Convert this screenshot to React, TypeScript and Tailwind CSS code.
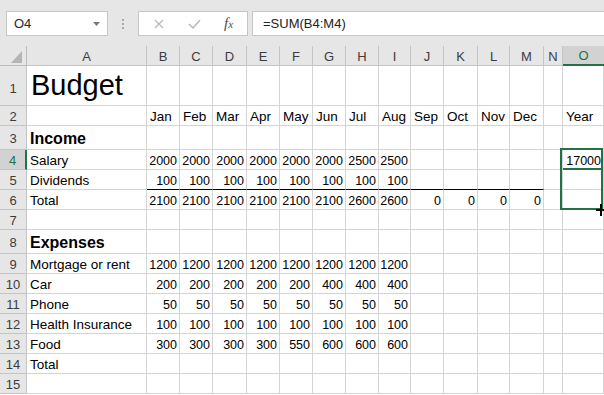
import React from "react";

const GREEN = "#217346";

type V = string | number | null;

const pad = (row: V[]): V[] => [...row, ...Array(15 - row.length).fill(null)];
const rep = (v: number, n: number) => Array(n).fill(v) as number[];

const data: V[][] = [
  pad(["Budget"]),
  pad([null, "Jan", "Feb", "Mar", "Apr", "May", "Jun", "Jul", "Aug", "Sep", "Oct", "Nov", "Dec", null, "Year"]),
  pad(["Income"]),
  pad(["Salary", 2000, 2000, 2000, 2000, 2000, 2000, 2500, 2500, null, null, null, null, null, 17000]),
  pad(["Dividends", ...rep(100, 8)]),
  pad(["Total", 2100, 2100, 2100, 2100, 2100, 2100, 2600, 2600, 0, 0, 0, 0]),
  pad([]),
  pad(["Expenses"]),
  pad(["Mortgage or rent", ...rep(1200, 8)]),
  pad(["Car", 200, 200, 200, 200, 200, 400, 400, 400]),
  pad(["Phone", ...rep(50, 8)]),
  pad(["Health Insurance", ...rep(100, 8)]),
  pad(["Food", 300, 300, 300, 300, 550, 600, 600, 600]),
  pad(["Total"]),
  pad([]),
];

const columns = ["A", "B", "C", "D", "E", "F", "G", "H", "I", "J", "K", "L", "M", "N", "O"];

function Toolbar() {
  return (
    <div className="h-[46px] bg-[#e6e6e6] flex items-start pt-[11px]">
      {/* name box */}
      <div className="ml-[6px] w-[102px] h-[25px] bg-white border border-[#c6c6c6] flex items-center justify-between pl-[7px] pr-[7px]">
        <span className="text-[13px] text-[#262626] leading-none">O4</span>
        <svg width="7" height="4" viewBox="0 0 7 4">
          <polygon points="0,0 7,0 3.5,4" fill="#7a7a7a" />
        </svg>
      </div>
      {/* grip dots */}
      <div className="ml-[14px] mt-[8px] flex flex-col gap-[2px]">
        <span className="w-[2px] h-[2px] bg-[#ababab]" />
        <span className="w-[2px] h-[2px] bg-[#ababab]" />
        <span className="w-[2px] h-[2px] bg-[#ababab]" />
      </div>
      {/* cancel / enter / fx */}
      <div className="ml-[14px] w-[110px] h-[25px] bg-white border border-[#c6c6c6] flex items-center">
        <svg className="ml-[15px]" width="10" height="10" viewBox="0 0 10 10">
          <path d="M1 1 L9 9 M9 1 L1 9" stroke="#bcbcbc" strokeWidth="1.4" fill="none" />
        </svg>
        <svg className="ml-[24px]" width="13" height="10" viewBox="0 0 13 10">
          <path d="M1 5 L5 9 L12 1" stroke="#bcbcbc" strokeWidth="1.6" fill="none" />
        </svg>
        <span className="ml-[23px] font-['Liberation_Serif',serif] italic text-[15px] text-[#4a4a4a] leading-none">
          f<span className="text-[11px]">x</span>
        </span>
      </div>
      {/* formula input */}
      <div className="ml-[4px] flex-1 h-[25px] bg-white border border-[#c6c6c6] border-r-0 flex items-center pl-[10px]">
        <span className="text-[13px] text-[#222] leading-none">=SUM(B4:M4)</span>
      </div>
    </div>
  );
}

function Cell({ v, r, c }: { v: V; r: number; c: number }) {
  const isNum = typeof v === "number";
  const underline = r === 4 && c >= 1 && c <= 12;
  let cls = "border-r border-b border-[#d4d4d4] flex items-end whitespace-nowrap text-black leading-none ";
  if (underline) cls += "border-b-black ";
  if (v === null) return <div className={cls} />;
  if (r === 0 && c === 0) {
    return (
      <div className={cls + "pl-[4px] pb-[5px]"}>
        <span className="text-[29px]">{v}</span>
      </div>
    );
  }
  if ((r === 2 || r === 7) && c === 0) {
    return (
      <div className={cls + "pl-[3px] pb-[2px]"}>
        <span className="text-[16px] font-bold">{v}</span>
      </div>
    );
  }
  if (isNum) {
    return (
      <div className={cls + "justify-end pr-[2px] pb-[2px]"}>
        <span className="text-[12.5px]">{v}</span>
      </div>
    );
  }
  return (
    <div className={cls + "pl-[3px] pb-[2px]"}>
      <span className="text-[13.5px]">{v}</span>
    </div>
  );
}

export default function App() {
  return (
    <div className="w-[604px] h-[395px] overflow-hidden bg-white font-['Liberation_Sans',Arial,sans-serif]">
      <Toolbar />
      <div className="relative grid grid-cols-[27px_120px_33px_33px_34px_33px_33px_33px_33px_32px_33px_34px_32px_34px_19px_1fr] grid-rows-[20px_40px_20px_24px_20px_20px_20px_20px_24px_20px_20px_20px_20px_20px_20px_20px]">
        {/* corner */}
        <div className="bg-[#e6e6e6] border-r border-b border-[#bcbcbc] relative">
          <svg className="absolute left-0 top-0" width="26" height="19" viewBox="0 0 26 19">
            <polygon points="11,17 22,17 22,5" fill="#b5b5b5" />
          </svg>
        </div>
        {columns.map((col) =>
          col === "O" ? (
            <div
              key={col}
              className="bg-[#d2d2d2] border-b-2 border-b-[#217346] flex items-center justify-center text-[13px] text-[#217346] leading-none pt-[1px]"
            >
              {col}
            </div>
          ) : (
            <div
              key={col}
              className="bg-[#e6e6e6] border-r border-b border-[#c4c4c4] flex items-center justify-center text-[13px] text-[#3c3c3c] leading-none pt-[2px]"
            >
              {col}
            </div>
          )
        )}
        {data.map((row, r) => (
          <React.Fragment key={r}>
            {r === 3 ? (
              <div className="bg-[#d2d2d2] border-b border-[#c4c4c4] border-r-2 border-r-[#217346] flex items-center justify-center text-[13px] text-[#217346] leading-none pt-[1px]">
                {r + 1}
              </div>
            ) : (
              <div
                className={
                  "bg-[#e6e6e6] border-r border-b border-[#c4c4c4] flex justify-center text-[13px] text-[#3c3c3c] leading-none " +
                  (r === 0 ? "items-end pb-[10px]" : "items-center pt-[1px]")
                }
              >
                {r + 1}
              </div>
            )}
            {row.map((v, c) => (
              <Cell key={c} v={v} r={r} c={c} />
            ))}
          </React.Fragment>
        ))}

        {/* selection outline O4:O6 */}
        <div className="absolute left-[560px] top-[102px] w-[43px] h-[62px] border-2 border-[#217346] pointer-events-none" />
        <div className="absolute left-[563px] top-[122px] w-[38px] h-[2px] bg-[#217346]" />
        {/* fill cursor */}
        <svg className="absolute left-[596px] top-[158px]" width="9" height="12" viewBox="0 0 9 12">
          <rect x="0" y="5" width="9" height="2" fill="#000" />
          <rect x="4" y="0" width="2" height="12" fill="#000" />
        </svg>
      </div>
    </div>
  );
}
